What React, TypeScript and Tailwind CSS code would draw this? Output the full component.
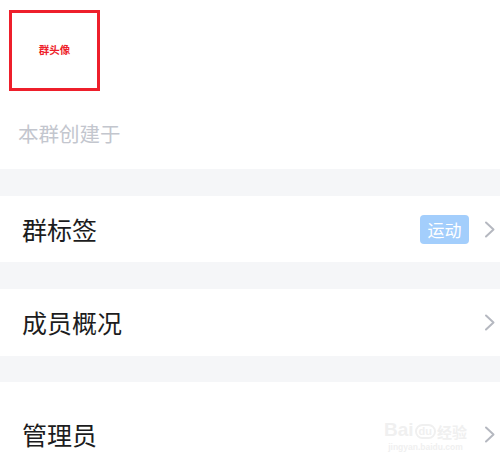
import React from "react";

const font = { fontFamily: '"Noto Sans CJK SC", "Noto Sans", sans-serif' };

function Chevron() {
  return (
    <svg width="12" height="17" viewBox="0 0 12 17" className="shrink-0">
      <path d="M2 1.5 L9.5 8.5 L2 15.5" fill="none" stroke="#b5b8c0" strokeWidth="2" strokeLinecap="round" strokeLinejoin="round" />
    </svg>
  );
}

function Row({ label, h, children }: { label: string; h: string; children?: React.ReactNode }) {
  return (
    <div className={`relative flex items-center bg-white pl-[22px] pr-[4px] ${h}`}>
      <span className="flex-1 text-[25px] leading-none text-[#1c1c20]">{label}</span>
      {children}
      <Chevron />
    </div>
  );
}

export default function App() {
  return (
    <div className="h-[474px] w-[500px] overflow-hidden bg-[#f5f6f8]" style={font}>
      <div className="h-[169px] bg-white pl-[9px] pt-[10px]">
        <div className="flex h-[81px] w-[91px] items-center justify-center border-[3px] border-[#ee1f2b]">
          <span className="text-[10.5px] font-bold leading-none text-[#ee1f2b]">群头像</span>
        </div>
        <div className="mt-[28px] pl-[9px] text-[20.5px] leading-[28px] text-[#c3c6ce]">本群创建于</div>
      </div>
      <div className="h-[27px]" />
      <Row label="群标签" h="h-[66px]">
        <span className="mr-[15px] flex h-[29px] w-[49px] items-center justify-center rounded-[4px] bg-[#a3cefc] text-[17px] leading-none text-white">
          运动
        </span>
      </Row>
      <div className="h-[27px]" />
      <Row label="成员概况" h="h-[67px]" />
      <div className="h-[26px]" />
      <Row label="管理员" h="h-[107px] pb-[2px]">
        <div className="pointer-events-none absolute left-[384px] top-[38px] flex flex-col items-center leading-none">
          <div className="flex items-end gap-[1px]">
            <span className="text-[19px] font-bold text-[#f0f0f0]" style={{ fontFamily: '"Liberation Sans", sans-serif' }}>Bai</span>
            <span className="rounded-full border-2 border-[#f0f0f0] px-[2px] text-[11px] font-bold text-[#f0f0f0]" style={{ fontFamily: '"Liberation Sans", sans-serif' }}>du</span>
            <span className="text-[15px] font-bold text-[#f0f0f0]">经验</span>
          </div>
          <span className="mt-[4px] text-[8.5px] font-bold text-[#f0f0f0]" style={{ fontFamily: '"Liberation Sans", sans-serif' }}>jingyan.baidu.com</span>
        </div>
      </Row>
    </div>
  );
}
